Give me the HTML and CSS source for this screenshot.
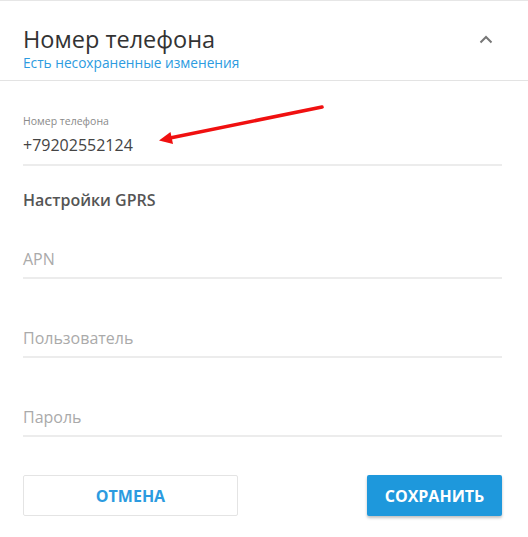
FILE: index.html
```html
<!DOCTYPE html>
<html lang="ru">

<head>
    <meta charset="UTF-8">
    <meta name="viewport" content="width=device-width, initial-scale=1.0">
    <title>Номер телефона</title>
    <link rel="stylesheet" href="styles.css">
</head>

<body>
    <div class="panel">
        <!-- заголовок -->
        <header class="panel-header">
            <div class="panel-titles">
                <h1>Номер телефона</h1>
                <p class="unsaved">Есть несохраненные изменения</p>
            </div>
            <svg class="collapse" width="14" height="9" viewBox="0 0 14 9">
                <path d="M1.5 7.5 L7 2 L12.5 7.5" fill="none" stroke="#777" stroke-width="2" />
            </svg>
        </header>

        <!-- форма -->
        <section class="panel-body">
            <div class="field filled">
                <label class="field-label">Номер телефона</label>
                <div class="field-value">+79202552124</div>
            </div>

            <h2 class="group-title">Настройки GPRS</h2>

            <div class="field">
                <div class="field-placeholder">APN</div>
            </div>
            <div class="field">
                <div class="field-placeholder">Пользователь</div>
            </div>
            <div class="field">
                <div class="field-placeholder">Пароль</div>
            </div>

            <div class="actions">
                <button class="btn btn-cancel">ОТМЕНА</button>
                <button class="btn btn-save">СОХРАНИТЬ</button>
            </div>
        </section>

        <!-- стрелка-пометка -->
        <svg class="marker" width="180" height="55" viewBox="0 0 180 55">
            <path d="M172 11 L20 42" stroke="#f01010" stroke-width="3.5" stroke-linecap="round" />
            <path d="M9 44.5 L20.5 36 L23 48 Z" fill="#f01010" />
        </svg>
    </div>
</body>

</html>
```

FILE: styles.css
```css
/* базовые стили */
body {
    margin: 0;
    padding: 0;
    font-family: "Open Sans", "Noto Sans", sans-serif;
    background-color: #fff;
    color: #333;
}

h1,
h2,
p {
    margin: 0;
    padding: 0;
}

.panel {
    position: relative;
    width: 528px;
    height: 537px;
    border-top: 1px solid #e6e6e6;
    box-sizing: border-box;
}

/* заголовок */
.panel-header {
    display: flex;
    justify-content: space-between;
    align-items: flex-start;
    padding: 23px 35px 9px 23px;
    border-bottom: 1px solid #e3e3e3;
}

.panel-header h1 {
    font-size: 23.5px;
    font-weight: 400;
    line-height: 30px;
    color: #333;
}

.unsaved {
    font-size: 13.7px;
    line-height: 17px;
    color: #2c9be0;
}

.collapse {
    margin-top: 11px;
}

/* форма */
.panel-body {
    padding: 33px 26px 0 23px;
}

.field {
    border-bottom: 2px solid #ececec;
    height: 48px;
    box-sizing: border-box;
}

.field.filled {
    height: 52px;
}

.field-label {
    display: block;
    font-size: 10.5px;
    line-height: 15px;
    color: #8a8a8a;
}

.field-value {
    font-size: 16px;
    line-height: 22px;
    color: #444;
    margin-top: 5px;
}

.field-placeholder {
    font-size: 16px;
    line-height: 20px;
    color: #aaa;
    padding-top: 18px;
}

.field + .field {
    margin-top: 31px;
}

.group-title {
    font-size: 16px;
    font-weight: 600;
    line-height: 20px;
    color: #555;
    margin: 24px 0 21px;
}

/* кнопки */
.actions {
    display: flex;
    justify-content: space-between;
    margin-top: 38px;
}

.btn {
    height: 41px;
    font-family: "Open Sans", "Noto Sans", sans-serif;
    font-size: 16px;
    font-weight: 700;
    border-radius: 2px;
    cursor: pointer;
}

.btn-cancel {
    width: 215px;
    background-color: #fff;
    color: #2c9be0;
    border: 1px solid #e4e4e4;
}

.btn-save {
    width: 135px;
    background-color: #1e98dc;
    color: #fff;
    border: none;
    box-shadow: 0 2px 3px rgba(0, 0, 0, 0.25);
}

/* пометка поверх формы */
.marker {
    position: absolute;
    left: 150px;
    top: 95px;
}
```
